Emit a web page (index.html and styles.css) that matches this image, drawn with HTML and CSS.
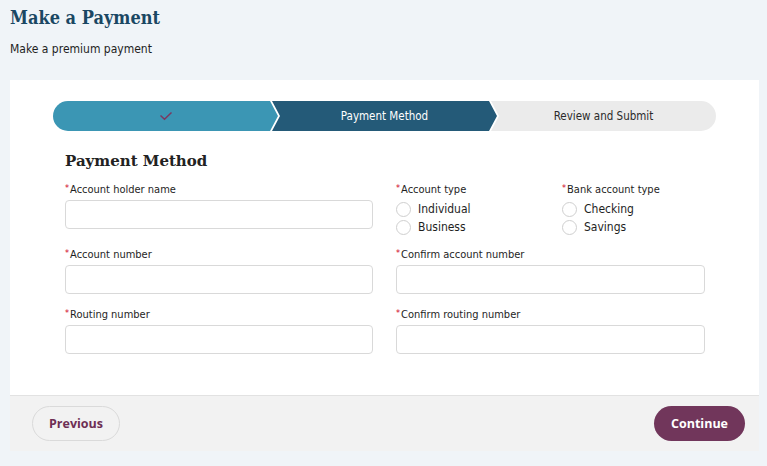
FILE: index.html
```html
<!DOCTYPE html>
<html>
<head>
<meta charset="utf-8">
<link rel="stylesheet" href="styles.css">
</head>
<body>
<header class="page-head">
  <h1 class="page-title">Make a Payment</h1>
  <p class="page-sub">Make a premium payment</p>
</header>
<main class="card">
  <div class="card-body">
    <div class="stepper">
      <div class="step step-done">
        <svg class="check" width="14" height="10" viewBox="0 0 14 10"><path d="M1.5 4.5 L5.5 8.2 L12.5 1.5" fill="none" stroke="#7b3860" stroke-width="1.5"/></svg>
      </div>
      <div class="step step-active">Payment Method</div>
      <div class="step step-next">Review and Submit</div>
    </div>
    <section class="form">
      <h2 class="form-title">Payment Method</h2>
      <div class="grid">
        <div class="field">
          <label class="label"><span class="req">*</span>Account holder name</label>
          <div class="input"></div>
        </div>
        <div class="radios-row">
          <div class="radio-group">
            <div class="label"><span class="req">*</span>Account type</div>
            <div class="radio"><span class="circle"></span>Individual</div>
            <div class="radio"><span class="circle"></span>Business</div>
          </div>
          <div class="radio-group">
            <div class="label"><span class="req">*</span>Bank account type</div>
            <div class="radio"><span class="circle"></span>Checking</div>
            <div class="radio"><span class="circle"></span>Savings</div>
          </div>
        </div>
        <div class="field">
          <label class="label"><span class="req">*</span>Account number</label>
          <div class="input"></div>
        </div>
        <div class="field">
          <label class="label"><span class="req">*</span>Confirm account number</label>
          <div class="input"></div>
        </div>
        <div class="field">
          <label class="label"><span class="req">*</span>Routing number</label>
          <div class="input"></div>
        </div>
        <div class="field">
          <label class="label"><span class="req">*</span>Confirm routing number</label>
          <div class="input"></div>
        </div>
      </div>
    </section>
  </div>
  <footer class="card-foot">
    <button class="btn btn-secondary">Previous</button>
    <button class="btn btn-primary">Continue</button>
  </footer>
</main>
</body>
</html>
```
FILE: styles.css
```css
* { box-sizing: border-box; }
html, body { margin: 0; padding: 0; }
body {
  background: #f0f4f8;
  font-family: "DejaVu Sans Condensed", "DejaVu Sans", Verdana, sans-serif;
  color: #1e1e1e;
  width: 767px;
  height: 466px;
  overflow: hidden;
}
.page-head { padding: 6px 10px 0 10px; height: 80px; }
.page-title {
  margin: 0;
  font-family: "DejaVu Serif Condensed", "DejaVu Serif", serif;
  font-weight: bold;
  font-size: 18px;
  line-height: 24px;
  color: #1a4763;
}
.page-sub {
  margin: 12px 0 0 0;
  font-size: 12px;
  line-height: 14px;
  color: #1e1e1e;
}
.card {
  margin: 0 8px 0 10px;
  background: #fff;
}
.card-body { padding: 21px 43px 0 43px; height: 315px; }
.stepper {
  display: flex;
  height: 30px;
  border-radius: 15px;
  overflow: hidden;
  background: #fff;
}
.step {
  flex: 1;
  display: flex;
  align-items: center;
  justify-content: center;
  font-size: 11.5px;
}
.step + .step { margin-left: -6px; }
.step-done {
  background: #3b96b4;
  clip-path: polygon(0 0, calc(100% - 8px) 0, 100% 50%, calc(100% - 8px) 100%, 0 100%);
}
.step-active {
  background: #245a78;
  color: #fff;
  clip-path: polygon(0 0, calc(100% - 8px) 0, 100% 50%, calc(100% - 8px) 100%, 0 100%, 8px 50%);
}
.step-next {
  background: #ebebeb;
  color: #2a2a2a;
  clip-path: polygon(0 0, 100% 0, 100% 100%, 0 100%, 8px 50%);
}
.check { display: block; }
.form { padding: 20px 11px 0 12px; }
.form-title {
  margin: 0 0 12px 0;
  font-family: "DejaVu Serif", serif;
  font-weight: bold;
  font-size: 15px;
  line-height: 20px;
  color: #222;
}
.grid {
  display: grid;
  grid-template-columns: 308px 309px;
  column-gap: 23px;
  row-gap: 14px;
}
.label {
  display: block;
  font-size: 11px;
  line-height: 13px;
  color: #1e1e1e;
  margin-bottom: 3px;
}
.req { color: #d0021b; margin-right: 1px; position: relative; top: -2px; font-size: 9px; }
.input {
  height: 29px;
  border: 1px solid #d9d9d9;
  border-radius: 4px;
  background: #fff;
}
.radios-row { display: flex; margin-bottom: -2px; }
.radio-group { width: 166px; flex-shrink: 0; }
.radio-group + .radio-group { width: auto; flex: 1; }
.radio-group .label { margin-bottom: 3px; }
.radio {
  display: flex;
  align-items: center;
  height: 18px;
  font-size: 12px;
  color: #1e1e1e;
}
.circle {
  width: 15px;
  height: 15px;
  border-radius: 50%;
  border: 1px solid #cfcfcf;
  background: #fff;
  margin-right: 7px;
}
.card-foot {
  display: flex;
  justify-content: space-between;
  align-items: center;
  height: 56px;
  padding: 0 14px 0 22px;
  background: #f2f2f2;
  border-top: 1px solid #e2e2e2;
}
.btn {
  font-family: "Open Sans", sans-serif;
  font-weight: bold;
  font-size: 12.5px;
  height: 35px;
  border-radius: 18px;
  cursor: pointer;
}
.btn-secondary {
  width: 88px;
  background: #f2f2f2;
  border: 1px solid #dadada;
  color: #6e2f55;
}
.btn-primary {
  width: 91px;
  background: #71365b;
  border: none;
  color: #fff;
}
```
